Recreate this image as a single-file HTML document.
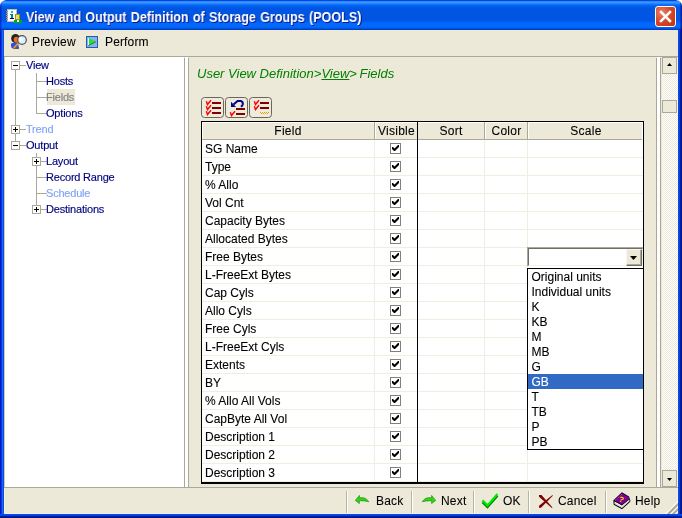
<!DOCTYPE html>
<html><head><meta charset="utf-8"><title>View and Output Definition of Storage Groups (POOLS)</title>
<style>
*{box-sizing:border-box;margin:0;padding:0}
html,body{width:682px;height:518px;overflow:hidden;background:#fff}
body{font-family:"Liberation Sans",sans-serif;font-size:12px;color:#000;position:relative}
.a{position:absolute}
#win{position:absolute;left:0;top:0;width:682px;height:518px;background:#ECE9D8;overflow:hidden;border-radius:6px 6px 0 0}
#title{left:0;top:0;width:682px;height:30px;border-radius:6px 6px 0 0;
 background:linear-gradient(to bottom,#0145DB 0.5px,#2B87FF 1.5px,#3C97FF 2.5px,#2385FF 3.5px,#0E73FD 4.5px,#0466F4 5.5px,#025EEC 6.5px,#0159E7 7.5px,#0055E3 8.5px,#0055E3 9.5px,#0055E3 10.5px,#0055E3 11.5px,#0055E3 12.5px,#0055E3 13.5px,#0055E3 14.5px,#0055E3 15.5px,#0055E3 16.5px,#0055E3 17.5px,#0055E3 18.5px,#0055E3 19.5px,#0057E8 20.5px,#005CF1 21.5px,#0263FA 22.5px,#0368FE 23.5px,#0268FE 24.5px,#0268FE 25.5px,#0268FE 26.5px,#0062F4 27.5px,#0053DE 28.5px,#003FBE 29.5px)}
#title .txt{left:26px;top:9px;color:#fff;font-weight:bold;font-size:14px;white-space:nowrap;text-shadow:1px 1px 0 #0a1883;line-height:16px;transform:scaleX(0.895);transform-origin:0 0;word-spacing:1px}
#bl{left:0;top:30px;width:4px;height:488px;background:linear-gradient(to right,#0014D0 0.5px,#0A38DC 1.5px,#1668F0 2.5px,#0552E0 3.5px)}
#br{left:678px;top:30px;width:4px;height:488px;background:linear-gradient(to right,#0848EC 0.5px,#0340E6 1.5px,#00209C 2.5px,#00138C 3.5px)}
#bb{left:0;top:514px;width:682px;height:4px;background:linear-gradient(to bottom,#0848EC 0.5px,#0340E6 1.5px,#00209C 2.5px,#00138C 3.5px)}
#close{left:655px;top:6px;width:21px;height:21px;border:1px solid #fff;border-radius:3px;background:radial-gradient(circle at 30% 30%,#e8836b 0%,#d9482a 45%,#c1300f 100%)}
.tb{line-height:16px;font-size:12px;white-space:nowrap}
.t{font-size:11px;color:#000080;white-space:nowrap;line-height:16px;height:16px;letter-spacing:-0.2px}
.t.d{color:#80A4F4}
.ln{background:#ACA899}
.h{top:123px;height:16px;text-align:center;font-size:12px;line-height:17px;white-space:nowrap;letter-spacing:0.25px}
.r{left:205px;font-size:12px;line-height:18px;height:18px;white-space:nowrap}
.cb{left:390px;width:11px;height:11px;border:1px solid #808080;background:#fff}
.o{left:528px;width:115px;height:15px;line-height:17px;font-size:12px;padding-left:3.5px;white-space:nowrap;overflow:hidden}
.bt{top:493px;height:16px;line-height:16px;font-size:12px;white-space:nowrap;letter-spacing:0.2px}
.sep{top:491px;width:2px;height:22px;border-left:1px solid #B8B4A4;border-right:1px solid #fff}
.gl{background:#F0EEE1}
.t,.tb,.h,.r,.o,.bt,.txt,.it{will-change:transform}
.t{-webkit-text-stroke:0.15px}
.tb,.bt{-webkit-text-stroke:0.08px}
.h,.r,.o{-webkit-text-stroke:0.1px}
.tb{letter-spacing:0.15px}
</style></head><body>
<div id="win">
<div id="title" class="a"><div class="txt a">View and Output Definition of Storage Groups (POOLS)</div></div>
<div id="close" class="a"><svg width="19" height="19" viewBox="0 0 19 19" style="position:absolute;left:0;top:0"><path d="M5 5 L14 14 M14 5 L5 14" stroke="#fff" stroke-width="2.5" stroke-linecap="square"/></svg></div>
<div class="a" style="left:0;top:0;width:3px;height:30px;background:linear-gradient(to right,rgba(0,10,170,0.5) 0.5px,rgba(0,10,170,0.22) 1.5px,rgba(0,10,170,0) 2.5px)"></div>
<div class="a" style="left:679px;top:0;width:3px;height:30px;background:linear-gradient(to right,rgba(0,10,140,0) 0.5px,rgba(0,10,140,0.35) 1.5px,rgba(0,10,140,0.65) 2.5px)"></div>
<div id="bl" class="a"></div><div id="br" class="a"></div><div id="bb" class="a"></div>
<div class="a tb" style="left:32px;top:34px">Preview</div>
<div class="a tb" style="left:105px;top:34px">Perform</div>
<div class="a ln" style="left:4px;top:56px;width:674px;height:1px"></div>
<div class="a" style="left:5px;top:57px;width:179px;height:430px;background:#fff"></div>
<div class="a ln" style="left:184px;top:58px;width:1px;height:429px"></div>
<div class="a" style="left:185px;top:57px;width:3px;height:430px;background:#fff"></div>
<div class="a ln" style="left:188px;top:58px;width:1px;height:429px"></div>
<div class="a ln" style="left:15px;top:70px;width:1px;height:75px"></div>
<div class="a ln" style="left:36px;top:73px;width:1px;height:41px"></div>
<div class="a ln" style="left:36px;top:153px;width:1px;height:57px"></div>
<div class="a ln" style="left:20px;top:65px;width:6px;height:1px"></div>
<div class="a" style="left:11px;top:61px;width:9px;height:9px;border:1px solid #ACA899;background:#fff"></div>
<div class="a" style="left:13px;top:65px;width:5px;height:1px;background:#000"></div>
<div class="a t" style="left:26px;top:57px">View</div>
<div class="a ln" style="left:37px;top:81px;width:10px;height:1px"></div>
<div class="a t" style="left:45.8px;top:73px">Hosts</div>
<div class="a ln" style="left:37px;top:97px;width:10px;height:1px"></div>
<div class="a" style="left:47px;top:89px;width:28px;height:16px;background:#ECE9D8"></div>
<div class="a t" style="left:45.8px;top:89px;color:#808080">Fields</div>
<div class="a ln" style="left:37px;top:113px;width:10px;height:1px"></div>
<div class="a t" style="left:45.8px;top:105px">Options</div>
<div class="a ln" style="left:20px;top:129px;width:6px;height:1px"></div>
<div class="a" style="left:11px;top:125px;width:9px;height:9px;border:1px solid #ACA899;background:#fff"></div>
<div class="a" style="left:13px;top:129px;width:5px;height:1px;background:#000"></div>
<div class="a" style="left:15px;top:127px;width:1px;height:5px;background:#000"></div>
<div class="a t d" style="left:26px;top:121px">Trend</div>
<div class="a ln" style="left:20px;top:145px;width:6px;height:1px"></div>
<div class="a" style="left:11px;top:141px;width:9px;height:9px;border:1px solid #ACA899;background:#fff"></div>
<div class="a" style="left:13px;top:145px;width:5px;height:1px;background:#000"></div>
<div class="a t" style="left:26px;top:137px">Output</div>
<div class="a ln" style="left:41px;top:161px;width:6px;height:1px"></div>
<div class="a" style="left:32px;top:157px;width:9px;height:9px;border:1px solid #ACA899;background:#fff"></div>
<div class="a" style="left:34px;top:161px;width:5px;height:1px;background:#000"></div>
<div class="a" style="left:36px;top:159px;width:1px;height:5px;background:#000"></div>
<div class="a t" style="left:45.8px;top:153px">Layout</div>
<div class="a ln" style="left:37px;top:177px;width:10px;height:1px"></div>
<div class="a t" style="left:45.8px;top:169px">Record Range</div>
<div class="a ln" style="left:37px;top:193px;width:10px;height:1px"></div>
<div class="a t d" style="left:45.8px;top:185px">Schedule</div>
<div class="a ln" style="left:41px;top:209px;width:6px;height:1px"></div>
<div class="a" style="left:32px;top:205px;width:9px;height:9px;border:1px solid #ACA899;background:#fff"></div>
<div class="a" style="left:34px;top:209px;width:5px;height:1px;background:#000"></div>
<div class="a" style="left:36px;top:207px;width:1px;height:5px;background:#000"></div>
<div class="a t" style="left:45.8px;top:201px">Destinations</div>
<div class="a ln" style="left:656px;top:58px;width:1px;height:429px"></div>
<div class="a" style="left:657px;top:57px;width:3px;height:430px;background:#fff"></div>
<div class="a ln" style="left:660px;top:58px;width:1px;height:429px"></div>
<div class="a" style="left:4px;top:57px;width:1px;height:430px;background:#CFC8B4"></div>
<div class="a" style="left:662px;top:57px;width:16px;height:430px;background:#fff;background-image:linear-gradient(45deg,#ECE9D8 25%,transparent 25%,transparent 75%,#ECE9D8 75%),linear-gradient(45deg,#ECE9D8 25%,transparent 25%,transparent 75%,#ECE9D8 75%);background-size:2px 2px;background-position:0 0,1px 1px"></div>
<div class="a" style="left:662px;top:57px;width:15px;height:17px;background:#ECE9D8;border:1px solid #ACA899"></div>
<svg class="a" style="left:667px;top:63px" width="5" height="3"><path d="M0 3 L2.5 0 L5 3Z" fill="#000"/></svg>
<div class="a" style="left:662px;top:100px;width:15px;height:13px;background:#ECE9D8;border:1px solid #ACA899"></div>
<div class="a" style="left:662px;top:470px;width:15px;height:17px;background:#ECE9D8;border:1px solid #ACA899"></div>
<svg class="a" style="left:667px;top:478px" width="5" height="3"><path d="M0 0 L5 0 L2.5 3Z" fill="#000"/></svg>
<div class="a it" style="left:197px;top:66px;font-size:13px;font-style:italic;color:#008000;white-space:nowrap;line-height:16px">User View Definition&gt;<span style="text-decoration:underline">View</span>&gt;<span style="margin-left:2.5px">Fields</span></div>
<div class="a" style="left:201px;top:97px;width:23px;height:21px;border:1px solid #6A6758;border-radius:3.5px;background:#EEEBDC"></div>
<div class="a" style="left:225px;top:97px;width:23px;height:21px;border:1px solid #6A6758;border-radius:3.5px;background:#EEEBDC"></div>
<div class="a" style="left:249px;top:97px;width:23px;height:21px;border:1px solid #6A6758;border-radius:3.5px;background:#EEEBDC"></div>
<div class="a" style="left:201px;top:121px;width:443px;height:363px;background:#fff;border:1px solid #000;border-bottom-width:2px"></div>
<div class="a" style="left:202px;top:122px;width:441px;height:17px;background:#ECE9D8"></div>
<div class="a h" style="left:202px;width:172px">Field</div>
<div class="a h" style="left:376px;width:41px">Visible</div>
<div class="a h" style="left:418px;width:66px">Sort</div>
<div class="a h" style="left:486px;width:41px">Color</div>
<div class="a h" style="left:529px;width:114px">Scale</div>
<div class="a ln" style="left:202px;top:139px;width:441px;height:1px"></div>
<div class="a" style="left:202px;top:122px;width:441px;height:1px;background:#fff"></div>
<div class="a" style="left:202px;top:122px;width:1px;height:17px;background:#fff"></div>
<div class="a" style="left:642px;top:122px;width:1px;height:18px;background:#fff"></div>
<div class="a ln" style="left:374px;top:122px;width:1px;height:17px"></div>
<div class="a" style="left:375px;top:122px;width:1px;height:17px;background:#fff"></div>
<div class="a gl" style="left:374px;top:140px;width:1px;height:342px"></div>
<div class="a ln" style="left:484px;top:122px;width:1px;height:17px"></div>
<div class="a" style="left:485px;top:122px;width:1px;height:17px;background:#fff"></div>
<div class="a gl" style="left:484px;top:140px;width:1px;height:342px"></div>
<div class="a ln" style="left:527px;top:122px;width:1px;height:17px"></div>
<div class="a" style="left:528px;top:122px;width:1px;height:17px;background:#fff"></div>
<div class="a gl" style="left:527px;top:140px;width:1px;height:342px"></div>
<div class="a gl" style="left:202px;top:157px;width:441px;height:1px"></div>
<div class="a r" style="top:140px">SG Name</div>
<div class="a cb" style="top:143px"><svg class="a" style="left:1px;top:1px" width="7" height="7"><path d="M0 2 L0 4 L2 6 L3 6 L7 2 L7 0 L6 0 L2.5 3.5 L1 2Z" fill="#000"/></svg></div>
<div class="a gl" style="left:202px;top:175px;width:441px;height:1px"></div>
<div class="a r" style="top:158px">Type</div>
<div class="a cb" style="top:161px"><svg class="a" style="left:1px;top:1px" width="7" height="7"><path d="M0 2 L0 4 L2 6 L3 6 L7 2 L7 0 L6 0 L2.5 3.5 L1 2Z" fill="#000"/></svg></div>
<div class="a gl" style="left:202px;top:193px;width:441px;height:1px"></div>
<div class="a r" style="top:176px">% Allo</div>
<div class="a cb" style="top:179px"><svg class="a" style="left:1px;top:1px" width="7" height="7"><path d="M0 2 L0 4 L2 6 L3 6 L7 2 L7 0 L6 0 L2.5 3.5 L1 2Z" fill="#000"/></svg></div>
<div class="a gl" style="left:202px;top:211px;width:441px;height:1px"></div>
<div class="a r" style="top:194px">Vol Cnt</div>
<div class="a cb" style="top:197px"><svg class="a" style="left:1px;top:1px" width="7" height="7"><path d="M0 2 L0 4 L2 6 L3 6 L7 2 L7 0 L6 0 L2.5 3.5 L1 2Z" fill="#000"/></svg></div>
<div class="a gl" style="left:202px;top:229px;width:441px;height:1px"></div>
<div class="a r" style="top:212px">Capacity Bytes</div>
<div class="a cb" style="top:215px"><svg class="a" style="left:1px;top:1px" width="7" height="7"><path d="M0 2 L0 4 L2 6 L3 6 L7 2 L7 0 L6 0 L2.5 3.5 L1 2Z" fill="#000"/></svg></div>
<div class="a gl" style="left:202px;top:247px;width:441px;height:1px"></div>
<div class="a r" style="top:230px">Allocated Bytes</div>
<div class="a cb" style="top:233px"><svg class="a" style="left:1px;top:1px" width="7" height="7"><path d="M0 2 L0 4 L2 6 L3 6 L7 2 L7 0 L6 0 L2.5 3.5 L1 2Z" fill="#000"/></svg></div>
<div class="a gl" style="left:202px;top:265px;width:441px;height:1px"></div>
<div class="a r" style="top:248px">Free Bytes</div>
<div class="a cb" style="top:251px"><svg class="a" style="left:1px;top:1px" width="7" height="7"><path d="M0 2 L0 4 L2 6 L3 6 L7 2 L7 0 L6 0 L2.5 3.5 L1 2Z" fill="#000"/></svg></div>
<div class="a gl" style="left:202px;top:283px;width:441px;height:1px"></div>
<div class="a r" style="top:266px">L-FreeExt Bytes</div>
<div class="a cb" style="top:269px"><svg class="a" style="left:1px;top:1px" width="7" height="7"><path d="M0 2 L0 4 L2 6 L3 6 L7 2 L7 0 L6 0 L2.5 3.5 L1 2Z" fill="#000"/></svg></div>
<div class="a gl" style="left:202px;top:301px;width:441px;height:1px"></div>
<div class="a r" style="top:284px">Cap Cyls</div>
<div class="a cb" style="top:287px"><svg class="a" style="left:1px;top:1px" width="7" height="7"><path d="M0 2 L0 4 L2 6 L3 6 L7 2 L7 0 L6 0 L2.5 3.5 L1 2Z" fill="#000"/></svg></div>
<div class="a gl" style="left:202px;top:319px;width:441px;height:1px"></div>
<div class="a r" style="top:302px">Allo Cyls</div>
<div class="a cb" style="top:305px"><svg class="a" style="left:1px;top:1px" width="7" height="7"><path d="M0 2 L0 4 L2 6 L3 6 L7 2 L7 0 L6 0 L2.5 3.5 L1 2Z" fill="#000"/></svg></div>
<div class="a gl" style="left:202px;top:337px;width:441px;height:1px"></div>
<div class="a r" style="top:320px">Free Cyls</div>
<div class="a cb" style="top:323px"><svg class="a" style="left:1px;top:1px" width="7" height="7"><path d="M0 2 L0 4 L2 6 L3 6 L7 2 L7 0 L6 0 L2.5 3.5 L1 2Z" fill="#000"/></svg></div>
<div class="a gl" style="left:202px;top:355px;width:441px;height:1px"></div>
<div class="a r" style="top:338px">L-FreeExt Cyls</div>
<div class="a cb" style="top:341px"><svg class="a" style="left:1px;top:1px" width="7" height="7"><path d="M0 2 L0 4 L2 6 L3 6 L7 2 L7 0 L6 0 L2.5 3.5 L1 2Z" fill="#000"/></svg></div>
<div class="a gl" style="left:202px;top:373px;width:441px;height:1px"></div>
<div class="a r" style="top:356px">Extents</div>
<div class="a cb" style="top:359px"><svg class="a" style="left:1px;top:1px" width="7" height="7"><path d="M0 2 L0 4 L2 6 L3 6 L7 2 L7 0 L6 0 L2.5 3.5 L1 2Z" fill="#000"/></svg></div>
<div class="a gl" style="left:202px;top:391px;width:441px;height:1px"></div>
<div class="a r" style="top:374px">BY</div>
<div class="a cb" style="top:377px"><svg class="a" style="left:1px;top:1px" width="7" height="7"><path d="M0 2 L0 4 L2 6 L3 6 L7 2 L7 0 L6 0 L2.5 3.5 L1 2Z" fill="#000"/></svg></div>
<div class="a gl" style="left:202px;top:409px;width:441px;height:1px"></div>
<div class="a r" style="top:392px">% Allo All Vols</div>
<div class="a cb" style="top:395px"><svg class="a" style="left:1px;top:1px" width="7" height="7"><path d="M0 2 L0 4 L2 6 L3 6 L7 2 L7 0 L6 0 L2.5 3.5 L1 2Z" fill="#000"/></svg></div>
<div class="a gl" style="left:202px;top:427px;width:441px;height:1px"></div>
<div class="a r" style="top:410px">CapByte All Vol</div>
<div class="a cb" style="top:413px"><svg class="a" style="left:1px;top:1px" width="7" height="7"><path d="M0 2 L0 4 L2 6 L3 6 L7 2 L7 0 L6 0 L2.5 3.5 L1 2Z" fill="#000"/></svg></div>
<div class="a gl" style="left:202px;top:445px;width:441px;height:1px"></div>
<div class="a r" style="top:428px">Description 1</div>
<div class="a cb" style="top:431px"><svg class="a" style="left:1px;top:1px" width="7" height="7"><path d="M0 2 L0 4 L2 6 L3 6 L7 2 L7 0 L6 0 L2.5 3.5 L1 2Z" fill="#000"/></svg></div>
<div class="a gl" style="left:202px;top:463px;width:441px;height:1px"></div>
<div class="a r" style="top:446px">Description 2</div>
<div class="a cb" style="top:449px"><svg class="a" style="left:1px;top:1px" width="7" height="7"><path d="M0 2 L0 4 L2 6 L3 6 L7 2 L7 0 L6 0 L2.5 3.5 L1 2Z" fill="#000"/></svg></div>
<div class="a gl" style="left:202px;top:481px;width:441px;height:1px"></div>
<div class="a r" style="top:464px">Description 3</div>
<div class="a cb" style="top:467px"><svg class="a" style="left:1px;top:1px" width="7" height="7"><path d="M0 2 L0 4 L2 6 L3 6 L7 2 L7 0 L6 0 L2.5 3.5 L1 2Z" fill="#000"/></svg></div>
<div class="a" style="left:417px;top:122px;width:1px;height:361px;background:#000"></div>
<div class="a" style="left:527px;top:247px;width:116px;height:19px;background:#fff;border-top:1px solid #ACA899;border-left:1px solid #ACA899"></div>
<div class="a" style="left:528px;top:248px;width:115px;height:18px;background:#fff;border-top:1px solid #716F64;border-left:1px solid #716F64;border-bottom:1px solid #F4F2E8;border-right:1px solid #F4F2E8"></div>
<div class="a" style="left:626px;top:249px;width:16px;height:17px;background:#ECE9D8;border-top:1px solid #F8F7F0;border-left:1px solid #F8F7F0;border-right:1px solid #716F64;border-bottom:1px solid #716F64;box-shadow:inset -1px -1px 0 #ACA899"></div>
<svg class="a" style="left:630px;top:256px" width="7" height="4"><path d="M0 0 L7 0 L3.5 4Z" fill="#000"/></svg>
<div class="a" style="left:527px;top:268px;width:117px;height:182px;background:#fff;border:1px solid #000"></div>
<div class="a o" style="top:269px">Original units</div>
<div class="a o" style="top:284px">Individual units</div>
<div class="a o" style="top:299px">K</div>
<div class="a o" style="top:314px">KB</div>
<div class="a o" style="top:329px">M</div>
<div class="a o" style="top:344px">MB</div>
<div class="a o" style="top:359px">G</div>
<div class="a o" style="top:374px;background:#316AC5;color:#fff">GB</div>
<div class="a o" style="top:389px">T</div>
<div class="a o" style="top:404px">TB</div>
<div class="a o" style="top:419px">P</div>
<div class="a o" style="top:434px">PB</div>
<div class="a" style="left:4px;top:488px;width:674px;height:26px;border:1px solid #F6F0DA;border-top:none"></div>
<div class="a ln" style="left:4px;top:487px;width:674px;height:1px"></div>
<div class="a sep" style="left:346px"></div>
<div class="a sep" style="left:411px"></div>
<div class="a sep" style="left:473px"></div>
<div class="a sep" style="left:528px"></div>
<div class="a sep" style="left:605px"></div>
<div class="a bt" style="left:376px">Back</div>
<div class="a bt" style="left:441px">Next</div>
<div class="a bt" style="left:503px">OK</div>
<div class="a bt" style="left:558px">Cancel</div>
<div class="a bt" style="left:635px">Help</div>
<svg class="a" style="left:5px;top:8px" width="18" height="16" viewBox="0 0 18 16"><g shape-rendering="crispEdges"><rect x="2" y="1" width="10" height="13" fill="#C8B8A0"/><rect x="3" y="2" width="8" height="11" fill="#fff"/><rect x="1" y="3" width="2" height="1" fill="#A09078"/><rect x="1" y="5" width="2" height="1" fill="#A09078"/><rect x="1" y="7" width="2" height="1" fill="#A09078"/><rect x="1" y="9" width="2" height="1" fill="#A09078"/><rect x="1" y="11" width="2" height="1" fill="#A09078"/><rect x="6" y="3" width="2" height="2" fill="#00C8D8"/><rect x="5" y="6" width="3" height="1" fill="#008080"/><rect x="6" y="7" width="2" height="3" fill="#008080"/><rect x="5" y="10" width="4" height="1" fill="#000080"/><rect x="10" y="6" width="5" height="6" fill="#A89800"/><rect x="11" y="7" width="3" height="4" fill="#D8D8D0"/><rect x="12" y="8" width="2" height="2" fill="#F0E020"/><rect x="9" y="12" width="8" height="3" fill="#00B000"/><rect x="12" y="12" width="2" height="2" fill="#fff"/></g></svg>
<svg class="a" style="left:10px;top:33px" width="18" height="17" viewBox="0 0 18 17"><ellipse cx="5.5" cy="5.5" rx="4.3" ry="4.5" fill="#222"/><ellipse cx="6.5" cy="6.8" rx="2.8" ry="3" fill="#E8701A"/><path d="M1 11 Q1 10 3 10 L8 10 L9 15.5 L3 15.5 Q1 15 1 13Z" fill="#2850F0"/><path d="M3 14.5 L9 14.5 L8.5 16 L3.5 16Z" fill="#555"/><path d="M8 10.5 L4.2 14.6" stroke="#F09020" stroke-width="1.8" stroke-linecap="round"/><circle cx="12" cy="7" r="4.3" fill="#D8F0FF" stroke="#505060" stroke-width="1.2"/><circle cx="11" cy="6" r="2" fill="#fff" opacity="0.8"/></svg>
<svg class="a" style="left:86px;top:36px" width="12" height="12" viewBox="0 0 12 12"><rect x="0.5" y="0.5" width="11" height="11" fill="#8FAFE6" stroke="#1C5DB5"/><path d="M2 1.6 L10 5.7 L2 9.8Z" fill="#22E040"/><path d="M2 9.8 L10 5.7" stroke="#208838" stroke-width="1"/><rect x="2" y="2.2" width="1" height="7" fill="#F0FFF0"/></svg>
<svg class="a" style="left:201px;top:97px" width="23" height="21" viewBox="0 0 23 21"><path d="M5.3 4.3 L6.5 7.5 L10 3.3" stroke="#FF0000" stroke-width="1.45" fill="none"/><path d="M5.3 9.3 L6.5 12.5 L10 8.3" stroke="#FF0000" stroke-width="1.45" fill="none"/><path d="M5.3 14.3 L6.5 17.5 L10 13.3" stroke="#FF0000" stroke-width="1.45" fill="none"/><rect x="11" y="5" width="9" height="2" fill="#800000" shape-rendering="crispEdges"/><rect x="11" y="10" width="9" height="2" fill="#800000" shape-rendering="crispEdges"/><rect x="11" y="15" width="9" height="2" fill="#800000" shape-rendering="crispEdges"/></svg>
<svg class="a" style="left:225px;top:97px" width="23" height="21" viewBox="0 0 23 21"><path d="M6 4.8 L6 10 L11 10 Z" fill="#00008C"/><path d="M8.5 7.5 L12.6 3.9 L15.8 3.9 Q18.2 5 17.8 7.2 Q17.4 9 15.8 9.6" stroke="#00008C" stroke-width="2" fill="none"/><rect x="11" y="11" width="9" height="2" fill="#800000" shape-rendering="crispEdges"/><rect x="11" y="16" width="9" height="2" fill="#800000" shape-rendering="crispEdges"/><path d="M5.3 15.3 L6.5 18.5 L10 14.3" stroke="#FF0000" stroke-width="1.45" fill="none"/></svg>
<svg class="a" style="left:249px;top:97px" width="23" height="21" viewBox="0 0 23 21"><path d="M5.3 4.3 L6.5 7.5 L10 3.3" stroke="#FF0000" stroke-width="1.45" fill="none"/><path d="M5.3 9.3 L6.5 12.5 L10 8.3" stroke="#FF0000" stroke-width="1.45" fill="none"/><rect x="11" y="5" width="9" height="2" fill="#800000" shape-rendering="crispEdges"/><rect x="11" y="10" width="9" height="2" fill="#800000" shape-rendering="crispEdges"/><g fill="#E0A010" shape-rendering="crispEdges"><rect x="11" y="15" width="1" height="1"/><rect x="12" y="16" width="1" height="1"/><rect x="13" y="15" width="1" height="1"/><rect x="14" y="16" width="1" height="1"/><rect x="15" y="15" width="1" height="1"/><rect x="16" y="16" width="1" height="1"/><rect x="17" y="15" width="1" height="1"/><rect x="18" y="16" width="1" height="1"/><rect x="19" y="15" width="1" height="1"/></g></svg>
<svg class="a" style="left:354px;top:493px" width="16" height="13" viewBox="0 0 16 13"><path d="M1.3 7.5 L5.4 2.4 L5.4 4.7 L9.5 4.7 Q12.5 5.2 14.8 8.7 Q11.5 7.9 5.4 7.7 L5.4 10.6 Z" fill="#2CD80C" stroke="#1C7A18" stroke-width="0.6" stroke-linejoin="round"/></svg>
<svg class="a" style="left:421px;top:493px" width="16" height="13" viewBox="0 0 16 13"><path d="M14.7 7.5 L10.6 2.4 L10.6 4.7 L6.5 4.7 Q3.5 5.2 1.2 8.7 Q4.5 7.9 10.6 7.7 L10.6 10.6 Z" fill="#2CD80C" stroke="#1C7A18" stroke-width="0.6" stroke-linejoin="round"/></svg>
<svg class="a" style="left:480px;top:492px" width="20" height="18" viewBox="0 0 20 18"><path d="M2.5 10.2 L7.5 15.2 L17.5 3.8" stroke="#008000" stroke-width="2.2" fill="none"/><path d="M2.5 8.4 L7.5 13.4 L17.5 2" stroke="#00EE00" stroke-width="2.2" fill="none"/></svg>
<svg class="a" style="left:537px;top:493px" width="17" height="17" viewBox="0 0 17 17"><path d="M2 2 L4.5 2 L15.5 14.5 L14.8 15 L2 3.8Z" fill="#800000"/><path d="M15.5 2 L15.8 2.8 L4 14.8 L2 14.8 L2 12.8 Z" fill="#800000"/></svg>
<svg class="a" style="left:612px;top:491px" width="20" height="20" viewBox="0 0 20 20"><path d="M1.4 9.3 L9.9 1.3 L17 5.5 L18.4 9.6 L18 11 L10 18.2 L1.7 13.8Z" fill="#000"/><path d="M2.6 10.6 L9.9 14.6 L17.4 8.6 L17.4 10.2 L9.9 17 L2.6 12.9Z" fill="#fff"/><path d="M2.6 12.2 L9.9 16.2 L17.4 9.8" stroke="#B8B8B8" stroke-width="0.8" fill="none"/><path d="M2.3 9.3 L9.9 2.2 L16.7 6.2 L17.3 8 L9.9 13.4Z" fill="#800090"/><path d="M3.2 9.3 L10.3 2.8" stroke="#C080C8" stroke-width="0.7" stroke-dasharray="1 1" fill="none"/><text x="7.4" y="11.2" font-family="Liberation Sans,sans-serif" font-weight="bold" font-size="7.5" fill="#FFEE00" transform="rotate(20 10 8)">?</text></svg>
<svg class="a" style="left:665px;top:501px" width="13" height="13" viewBox="0 0 13 13"><path d="M0.5 13.5 L13.5 0.5" stroke="#fff" stroke-width="1.3"/><path d="M2.8 13.5 L13.5 2.8" stroke="#B0AC9C" stroke-width="2.4"/><path d="M5.5 13.5 L13.5 5.5" stroke="#fff" stroke-width="1.3"/><path d="M7.8 13.5 L13.5 7.8" stroke="#B0AC9C" stroke-width="2.4"/><path d="M10.5 13.5 L13.5 10.5" stroke="#fff" stroke-width="1.3"/><path d="M12.8 13.5 L13.5 12.8" stroke="#B0AC9C" stroke-width="2.4"/></svg>
</div>
</body></html>
